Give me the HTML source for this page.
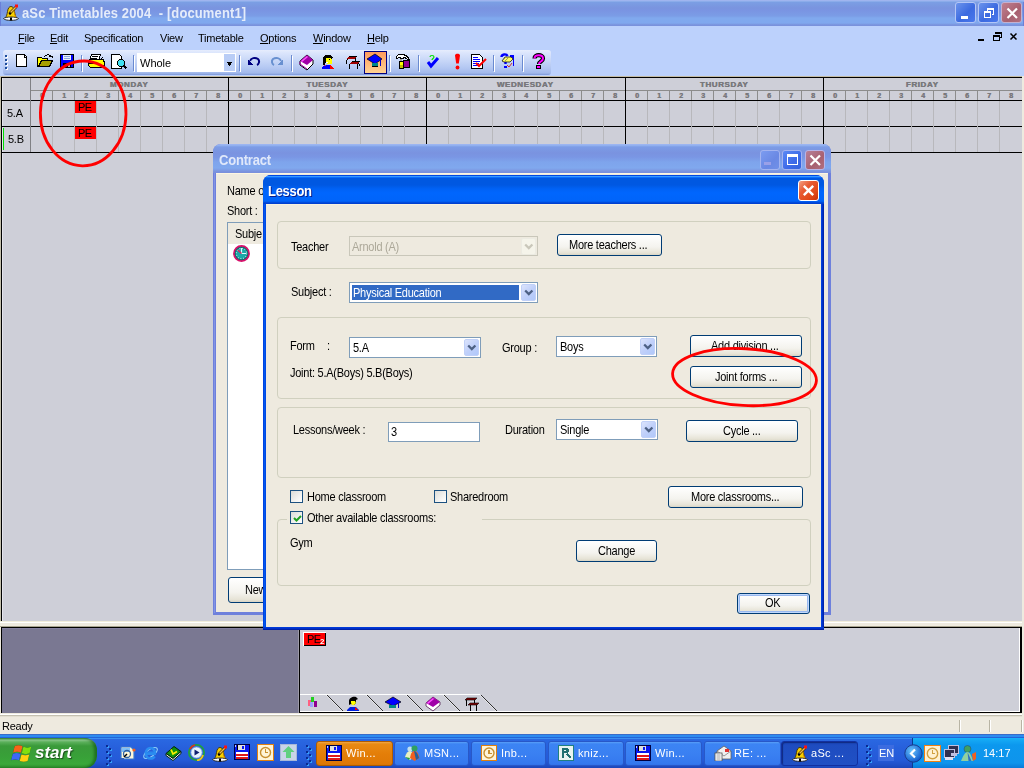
<!DOCTYPE html>
<html><head><meta charset="utf-8">
<style>
html,body{margin:0;padding:0;width:1024px;height:768px;overflow:hidden;background:#cecfd8;font-family:"Liberation Sans",sans-serif;font-size:11px;color:#000}
.a{position:absolute}
#root{position:relative;width:1024px;height:768px;overflow:hidden}
.dh{font-weight:bold;font-size:8px;color:#78787c;text-align:center;letter-spacing:0.6px;line-height:9px;text-shadow:0.5px 0 0 #78787c}
.dg{font-weight:bold;font-size:7px;color:#78787c;text-align:center;line-height:9px;text-shadow:0.5px 0 0 #78787c}
.xpb{width:20px;height:20px;border-radius:3px;box-sizing:border-box}
.inact{border:1px solid #a4b4f0;background:linear-gradient(135deg,#7c98ec,#5a78dc 60%,#6a88e4)}
.inactc{border:1px solid #b8b4e8;background:linear-gradient(135deg,#b88098,#a86070 60%,#b07080)}
.actc{width:21px;height:21px;border:1px solid #fff;background:linear-gradient(135deg,#f4a084 0%,#e85c34 35%,#e24a1a 70%,#c83008 100%)}
.btn{border:1px solid #003c74;border-radius:3px;box-sizing:border-box;background:linear-gradient(#fff,#f4f3ee 60%,#e6e3d6 90%,#d8d4c4)}
.gb{border:1px solid #d0d0bf;border-radius:4px;box-sizing:border-box}
.cb{background:#fff;border:1px solid #7f9db9;box-sizing:border-box}
.dis{background:#eeeadf;border-color:#c9c7ba}
.ddb{right:1px;top:1px;width:15px;height:17px;border-radius:2px;background:linear-gradient(135deg,#dce4fc,#c0d0fa 50%,#b0c8fa);border:1px solid #c0d0f8;box-sizing:border-box}
.disb{background:#f5f4ea;border-color:#ecebe2}
.chk{width:13px;height:13px;border:1px solid #1c5180;box-sizing:border-box;background:linear-gradient(135deg,#dcdcd7,#f6f6f4 70%,#fff)}
.def{box-shadow:inset 0 0 0 1px #c0d8fc,inset 0 0 0 2px #98b8f0}
.tbtn{width:21px;height:21px;box-sizing:border-box;border:1px solid #b4c6f6;border-radius:3px;background:linear-gradient(135deg,#6c94ec,#3c6ae0 55%,#4a78ec)}
.tclose{background:linear-gradient(135deg,#c08090,#a86070 60%,#b07080);border-color:#c4b0d0}
.d{transform:scaleY(1.12);transform-origin:0 2.3px}
.t{will-change:transform;position:absolute;letter-spacing:-0.25px;white-space:nowrap;line-height:13px}
</style></head><body><div id="root">
<!-- main title bar -->
<div class="a" style="left:0;top:0;width:1024px;height:26px;background:linear-gradient(#a3b1ee 0px,#9cb9f0 1px,#7b9fe4 2px,#7a94df 8px,#7a95e3 11px,#7b9de6 16px,#80a9ee 18px,#80a8ee 23px,#7a92dc 25px)"></div>
<div class="t" style="left:22px;top:5px;color:#e4ecfa;font-weight:bold;font-size:13px;line-height:16px;letter-spacing:0.12px;transform:scaleY(1.07);transform-origin:0 3px">aSc Timetables 2004&nbsp; - [document1]</div>
<div class="a" style="left:0;top:2px;width:1px;height:24px;background:#6a80d8"></div>
<div class="a" style="left:1023px;top:2px;width:1px;height:24px;background:#6a80d8"></div>
<svg class="a" style="left:2px;top:3px" width="18" height="18" shape-rendering="auto">
<path d="M3.5 14.5c1-1 1.5-3 2-6c0.6-3.5 1.8-5 3.5-5c1.7 0 2.9 1.5 3.5 5c0.5 3 1 5 2 6z" fill="#f8d000" stroke="#403000" stroke-width="0.9"/>
<path d="M11 5c1 2 1.5 5 2 9h1.5c-1-1-1.5-3-2-6c-0.3-1.5-0.8-2.5-1.5-3z" fill="#e89000"/>
<path d="M1.5 15.5c2-2 13-2 15 0c-1 2.5-14 2.5-15 0z" fill="#fff" stroke="#202020" stroke-width="0.9"/>
<rect x="8" y="14.5" width="2" height="3" fill="#000"/>
<path d="M7.5 10.5l6.5-6.5" stroke="#402800" stroke-width="2.6"/>
<path d="M7.5 10.5l6.5-6.5" stroke="#f0c040" stroke-width="1.4"/>
<rect x="13" y="1.5" width="3" height="3" fill="#ff1010"/>
<circle cx="8" cy="10.5" r="1.2" fill="#000"/>
</svg>
<div class="a tbtn" style="left:955px;top:2px"><div class="a" style="left:5px;top:13px;width:7px;height:3px;background:#fff"></div></div>
<div class="a tbtn" style="left:978px;top:2px"><svg class="a" style="left:0;top:0" width="21" height="21" shape-rendering="crispEdges"><path d="M8.5 5.5h6v6h-2M8.5 5.5v2" fill="none" stroke="#fff"/><rect x="8" y="5" width="7" height="2" fill="#fff"/><rect x="5.5" y="9.5" width="6" height="5" fill="none" stroke="#fff"/><rect x="5" y="8" width="7" height="2" fill="#fff"/></svg></div>
<div class="a tbtn tclose" style="left:1001px;top:2px"><svg class="a" style="left:0;top:0" width="21" height="21"><path d="M5.5 5.5L15 15M15 5.5L5.5 15" stroke="#fff" stroke-width="2.2"/></svg></div>

<!-- menu bar -->
<div class="a" style="left:0;top:26px;width:1024px;height:50px;background:#bcd1fc"></div>
<!-- mdi buttons -->
<svg class="a" style="left:970px;top:28px" width="54" height="20" shape-rendering="crispEdges">
<rect x="8" y="11" width="6" height="2" fill="#000"/>
<path d="M25.5 4.5h6v5h-2" fill="none" stroke="#000"/><rect x="25" y="4" width="7" height="2" fill="#000"/>
<rect x="23.5" y="7.5" width="6" height="5" fill="none" stroke="#000"/><rect x="23" y="7" width="7" height="2" fill="#000"/>
<path d="M40.5 5.5l6 6M46.5 5.5l-6 6" stroke="#000" stroke-width="1.5" shape-rendering="auto"/>
</svg>
<div class="t" style="left:18px;top:32px"><u>F</u>ile</div>
<div class="t" style="left:50px;top:32px"><u>E</u>dit</div>
<div class="t" style="left:84px;top:32px">Specification</div>
<div class="t" style="left:160px;top:32px">View</div>
<div class="t" style="left:198px;top:32px">Timetable</div>
<div class="t" style="left:260px;top:32px"><u>O</u>ptions</div>
<div class="t" style="left:313px;top:32px"><u>W</u>indow</div>
<div class="t" style="left:367px;top:32px"><u>H</u>elp</div>
<!-- toolbar -->
<div class="a" style="left:3px;top:50px;width:548px;height:25px;border-radius:3px 3px 3px 3px;background:linear-gradient(#e6edfd 0px,#dbe5fc 3px,#c9d8f8 10px,#b3c7f2 18px,#a2b9ec 23px,#7d98d8 25px)"></div>
<svg class="a" style="left:0;top:48px" width="560" height="30" shape-rendering="crispEdges">
<g fill="#fff"><rect x="6" y="8" width="2" height="2"/><rect x="6" y="12" width="2" height="2"/><rect x="6" y="16" width="2" height="2"/><rect x="6" y="20" width="2" height="2"/></g>
<g fill="#1c4c9c"><rect x="5" y="7" width="2" height="2"/><rect x="5" y="11" width="2" height="2"/><rect x="5" y="15" width="2" height="2"/><rect x="5" y="19" width="2" height="2"/></g>
<!-- new -->
<path d="M16.5 6.5H24.5L26.5 8.5V18.5H16.5Z" fill="#fff" stroke="#000"/>
<path d="M24 7v2h2" fill="none" stroke="#000"/>
<!-- open -->
<path d="M37.5 9.5h4l1 1h5v2h-6l-3.5 6h-0.5z" fill="#ffff00" stroke="#000"/>
<path d="M38.5 18.5l3-6h11l-3 6z" fill="#a8a000" stroke="#000"/>
<path d="M44 9c2-3 6-3 7 0" fill="none" stroke="#000"/><path d="M49 8h3v2" fill="none" stroke="#000"/>
<!-- save -->
<rect x="60.5" y="6.5" width="13" height="13" fill="#0000ff" stroke="#000"/>
<rect x="63" y="7" width="8" height="5" fill="#e8eef8"/><rect x="64" y="8" width="6" height="1" fill="#8ca8e0"/><rect x="64" y="10" width="6" height="1" fill="#8ca8e0"/>
<rect x="63" y="15" width="8" height="4" fill="#000"/><rect x="68" y="16" width="2" height="3" fill="#c0c0c0"/>
<rect x="81" y="7" width="1" height="16" fill="#6a8ad0"/><rect x="82" y="8" width="1" height="16" fill="#fff"/>
<!-- print -->
<path d="M91.5 6.5h9l-1.5 5h-9z" fill="#fff" stroke="#000"/>
<path d="M92 8.5h6M91 10h6" stroke="#000"/>
<path d="M88.5 13.5l1.5-2h13l1 2v4l-1.5 2h-12l-2-2z" fill="#ffff00" stroke="#000"/>
<path d="M89 15.5h9" stroke="#000"/><path d="M101 11l2-2" stroke="#000"/>
<!-- preview -->
<path d="M111.5 6.5H119.5L121.5 8.5V20.5H111.5Z" fill="#fff" stroke="#000"/>
<circle cx="121" cy="15" r="3.5" fill="#40e0f0" stroke="#000"/>
<path d="M123.5 17.5l3 3" stroke="#000" stroke-width="1.6"/>
<rect x="133" y="7" width="1" height="16" fill="#6a8ad0"/><rect x="134" y="8" width="1" height="16" fill="#fff"/>
<!-- combo -->
<rect x="137" y="5" width="99" height="19" fill="#fff"/>
<rect x="224" y="6" width="11" height="17" fill="#b9cdf6"/>
<path d="M227 14h5v1h-1v1h-3v-1h-1zM228 16h3v1h-1v1h-1z" fill="#000"/>
<rect x="239" y="7" width="1" height="16" fill="#6a8ad0"/><rect x="240" y="8" width="1" height="16" fill="#fff"/>
<!-- undo/redo -->
<path d="M250 13c1-3 5-4 8-2c2 2 1 5-1 6" fill="none" stroke="#000080" stroke-width="2" shape-rendering="auto"/>
<path d="M248 11v6h5z" fill="#000080"/>
<path d="M281 13c-1-3-5-4-8-2c-2 2-1 5 1 6" fill="none" stroke="#6890d0" stroke-width="2" shape-rendering="auto"/>
<path d="M283 11v6h-5z" fill="#6890d0"/>
<rect x="291" y="7" width="1" height="16" fill="#6a8ad0"/><rect x="292" y="8" width="1" height="16" fill="#fff"/>
<!-- book -->
<path d="M300 13l7-6l6 5v4l-6 6l-7-5z" fill="#fff" stroke="#000" shape-rendering="auto"/>
<path d="M300 13l7-6l6 5l-6 5z" fill="#a000a8" shape-rendering="auto"/>
<path d="M301 13l6-5l1 1l-6 5z" fill="#ff50ff" shape-rendering="auto"/>
<path d="M300 14v2l7 5" fill="none" stroke="#a000a8" shape-rendering="auto"/>
<!-- person -->
<path d="M325 7h5l2 1l1 2l-1 0v3h-1v-3h-5v5h-1v2h-2v-7z" fill="#000"/>
<path d="M326 10h5l1 2v3l-1 1h-3l-2-1z" fill="#ffff00"/>
<rect x="329" y="11" width="1" height="1" fill="#000"/><rect x="326" y="14" width="2" height="1" fill="#fff"/>
<path d="M322 21v-2l2-2h6l1 1v3z" fill="#0000ff"/>
<path d="M330 17l4 4h-4z" fill="#ff0000"/><path d="M324 17h2v1h-2z" fill="#c03080"/>
<!-- desks -->
<path d="M345 12h2l2-4h8l-1 3h-8l-1 1z" fill="#000"/><path d="M348 9h8l-1 2h-8z" fill="#a00000"/>
<rect x="346" y="12" width="1" height="4" fill="#000"/><rect x="355" y="11" width="1" height="2" fill="#000"/>
<path d="M348 16h2l2-3h8l-1 3h-9z" fill="#000"/><path d="M351 14h8l-1 2h-8z" fill="#a00000"/>
<rect x="349" y="16" width="1" height="5" fill="#000"/><rect x="357" y="16" width="1" height="5" fill="#000"/><rect x="359" y="16" width="1" height="2" fill="#000"/>
<!-- pressed -->
<defs><linearGradient id="og" x1="0" y1="0" x2="0" y2="1"><stop offset="0" stop-color="#ff9a5c"/><stop offset="1" stop-color="#ffd494"/></linearGradient></defs>
<rect x="364.5" y="3.5" width="22" height="22" fill="url(#og)" stroke="#000080"/>
<path d="M367 11l8-5l7 5l-7 5z" fill="#0000ff" stroke="#000" stroke-width="0.7" shape-rendering="auto"/>
<path d="M372 15h6v3h-6z" fill="#008888"/><path d="M372 18h6v1h-6z" fill="#000"/>
<rect x="380" y="12" width="1" height="6" fill="#0000c0"/>
<rect x="389" y="7" width="1" height="16" fill="#6a8ad0"/><rect x="390" y="8" width="1" height="16" fill="#fff"/>
<!-- hammer -->
<path d="M396.5 8.5l2-2h5l4 2l1.5 3h-1.5l-2.5-2h-2v1h-3v-1h-1.5l-1 1h-1z" fill="#fff" stroke="#000" stroke-width="1"/>
<rect x="400" y="11" width="2" height="3" fill="#a0a0a0"/>
<rect x="399.5" y="13.5" width="4" height="7" fill="#ffff00" stroke="#000"/>
<rect x="400" y="17" width="3" height="3" fill="#c0c000"/>
<rect x="403.5" y="12.5" width="6" height="7" fill="#900090" stroke="#000"/>
<rect x="418" y="7" width="1" height="16" fill="#6a8ad0"/><rect x="419" y="8" width="1" height="16" fill="#fff"/>
<!-- check -->
<path d="M428 14l3 4l7-8" fill="none" stroke="#0000ff" stroke-width="3" shape-rendering="auto"/>
<path d="M430 9c0-2 4-2 4 0c0 1-2 2-2 3" fill="none" stroke="#00e000" stroke-width="1.2" shape-rendering="auto"/>
<!-- exclam -->
<path d="M455 7.5c0-2.2 5-2.2 5 0l-1.2 8h-2.6z" fill="#ff0000" shape-rendering="auto"/><circle cx="457.5" cy="19.5" r="1.9" fill="#ff0000" shape-rendering="auto"/>
<!-- doc check -->
<path d="M471.5 6.5H479.5L482.5 9.5V20.5H471.5Z" fill="#fff" stroke="#000"/>
<g fill="#0000ff"><rect x="473" y="9" width="5" height="1"/><rect x="473" y="11" width="7" height="1"/><rect x="473" y="13" width="7" height="1"/><rect x="473" y="15" width="6" height="1"/><rect x="473" y="17" width="5" height="1"/></g>
<path d="M476 15l3 3l7-7" fill="none" stroke="#ff0000" stroke-width="2" shape-rendering="auto"/>
<rect x="493" y="7" width="1" height="16" fill="#6a8ad0"/><rect x="494" y="8" width="1" height="16" fill="#fff"/>
<!-- magic -->
<path d="M501.5 9c0-3 5-3.5 6-1M505.5 13v3" fill="none" stroke="#0000ff" stroke-width="2.4" shape-rendering="auto"/>
<rect x="504" y="18" width="3" height="2" fill="#0000ff"/>
<path d="M510 7h4v11h-1v-8l-3-1z" fill="#0000ff"/>
<path d="M502 13l3-4h6l2 2l-3 3h-6z" fill="#ffff60" stroke="#000" stroke-width="0.7" shape-rendering="auto"/>
<path d="M503 12l2-2M505 13l3-3" stroke="#707070" stroke-width="0.7"/>
<path d="M507 17l2 2l3-4" fill="none" stroke="#d02020" stroke-width="0.9" shape-rendering="auto"/>
<rect x="522" y="7" width="1" height="16" fill="#6a8ad0"/><rect x="523" y="8" width="1" height="16" fill="#fff"/>
<!-- help -->
<path d="M534.5 10.5c0-4.5 8.5-4.5 8.5 0c0 3-4 3-4 5.5" fill="none" stroke="#000" stroke-width="4.2" shape-rendering="auto"/>
<path d="M534.5 10.5c0-4.5 8.5-4.5 8.5 0c0 3-4 3-4 5.5" fill="none" stroke="#ff00ff" stroke-width="2" shape-rendering="auto"/>
<rect x="536.5" y="17.5" width="4" height="3" fill="#ff00ff" stroke="#000"/>
</svg>
<div class="t" style="left:140px;top:57px;letter-spacing:0">Whole</div>
<!-- grid -->
<div class="a" style="left:0;top:76px;width:1024px;height:1px;background:#c4bca4"></div>
<div class="a" style="left:0;top:77px;width:1024px;height:76px;background:#cecfd8"></div>
<div class="a" style="left:1px;top:77px;width:1021px;height:1px;background:#000"></div>
<div class="a" style="left:1px;top:77px;width:1px;height:550px;background:#000"></div><div class="a" style="left:2px;top:78px;width:1px;height:543px;background:#e4e4ec"></div>
<div class="a" style="left:30px;top:90px;width:992px;height:1px;background:#8c8c8c"></div>
<div class="a" style="left:1px;top:100px;width:1021px;height:1px;background:#000"></div>
<div class="a" style="left:1px;top:126px;width:1021px;height:1px;background:#000"></div>
<div class="a" style="left:1px;top:152px;width:1021px;height:1px;background:#000"></div>
<div class="a" style="left:30px;top:78px;width:1px;height:74px;background:#808084"></div>
<div class="a" style="left:52px;top:90px;width:1px;height:10px;background:#8c8c8c"></div>
<div class="a" style="left:52px;top:101px;width:1px;height:51px;background:#b8b8bc"></div>
<div class="a" style="left:74px;top:90px;width:1px;height:10px;background:#8c8c8c"></div>
<div class="a" style="left:74px;top:101px;width:1px;height:51px;background:#b8b8bc"></div>
<div class="a" style="left:96px;top:90px;width:1px;height:10px;background:#8c8c8c"></div>
<div class="a" style="left:96px;top:101px;width:1px;height:51px;background:#b8b8bc"></div>
<div class="a" style="left:118px;top:90px;width:1px;height:10px;background:#8c8c8c"></div>
<div class="a" style="left:118px;top:101px;width:1px;height:51px;background:#b8b8bc"></div>
<div class="a" style="left:140px;top:90px;width:1px;height:10px;background:#8c8c8c"></div>
<div class="a" style="left:140px;top:101px;width:1px;height:51px;background:#b8b8bc"></div>
<div class="a" style="left:162px;top:90px;width:1px;height:10px;background:#8c8c8c"></div>
<div class="a" style="left:162px;top:101px;width:1px;height:51px;background:#b8b8bc"></div>
<div class="a" style="left:184px;top:90px;width:1px;height:10px;background:#8c8c8c"></div>
<div class="a" style="left:184px;top:101px;width:1px;height:51px;background:#b8b8bc"></div>
<div class="a" style="left:206px;top:90px;width:1px;height:10px;background:#8c8c8c"></div>
<div class="a" style="left:206px;top:101px;width:1px;height:51px;background:#b8b8bc"></div>
<div class="a" style="left:228px;top:77px;width:1px;height:76px;background:#000"></div>
<div class="a" style="left:250px;top:90px;width:1px;height:10px;background:#8c8c8c"></div>
<div class="a" style="left:250px;top:101px;width:1px;height:51px;background:#b8b8bc"></div>
<div class="a" style="left:272px;top:90px;width:1px;height:10px;background:#8c8c8c"></div>
<div class="a" style="left:272px;top:101px;width:1px;height:51px;background:#b8b8bc"></div>
<div class="a" style="left:294px;top:90px;width:1px;height:10px;background:#8c8c8c"></div>
<div class="a" style="left:294px;top:101px;width:1px;height:51px;background:#b8b8bc"></div>
<div class="a" style="left:316px;top:90px;width:1px;height:10px;background:#8c8c8c"></div>
<div class="a" style="left:316px;top:101px;width:1px;height:51px;background:#b8b8bc"></div>
<div class="a" style="left:338px;top:90px;width:1px;height:10px;background:#8c8c8c"></div>
<div class="a" style="left:338px;top:101px;width:1px;height:51px;background:#b8b8bc"></div>
<div class="a" style="left:360px;top:90px;width:1px;height:10px;background:#8c8c8c"></div>
<div class="a" style="left:360px;top:101px;width:1px;height:51px;background:#b8b8bc"></div>
<div class="a" style="left:382px;top:90px;width:1px;height:10px;background:#8c8c8c"></div>
<div class="a" style="left:382px;top:101px;width:1px;height:51px;background:#b8b8bc"></div>
<div class="a" style="left:404px;top:90px;width:1px;height:10px;background:#8c8c8c"></div>
<div class="a" style="left:404px;top:101px;width:1px;height:51px;background:#b8b8bc"></div>
<div class="a" style="left:426px;top:77px;width:1px;height:76px;background:#000"></div>
<div class="a" style="left:448px;top:90px;width:1px;height:10px;background:#8c8c8c"></div>
<div class="a" style="left:448px;top:101px;width:1px;height:51px;background:#b8b8bc"></div>
<div class="a" style="left:470px;top:90px;width:1px;height:10px;background:#8c8c8c"></div>
<div class="a" style="left:470px;top:101px;width:1px;height:51px;background:#b8b8bc"></div>
<div class="a" style="left:492px;top:90px;width:1px;height:10px;background:#8c8c8c"></div>
<div class="a" style="left:492px;top:101px;width:1px;height:51px;background:#b8b8bc"></div>
<div class="a" style="left:514px;top:90px;width:1px;height:10px;background:#8c8c8c"></div>
<div class="a" style="left:514px;top:101px;width:1px;height:51px;background:#b8b8bc"></div>
<div class="a" style="left:537px;top:90px;width:1px;height:10px;background:#8c8c8c"></div>
<div class="a" style="left:537px;top:101px;width:1px;height:51px;background:#b8b8bc"></div>
<div class="a" style="left:559px;top:90px;width:1px;height:10px;background:#8c8c8c"></div>
<div class="a" style="left:559px;top:101px;width:1px;height:51px;background:#b8b8bc"></div>
<div class="a" style="left:581px;top:90px;width:1px;height:10px;background:#8c8c8c"></div>
<div class="a" style="left:581px;top:101px;width:1px;height:51px;background:#b8b8bc"></div>
<div class="a" style="left:603px;top:90px;width:1px;height:10px;background:#8c8c8c"></div>
<div class="a" style="left:603px;top:101px;width:1px;height:51px;background:#b8b8bc"></div>
<div class="a" style="left:625px;top:77px;width:1px;height:76px;background:#000"></div>
<div class="a" style="left:647px;top:90px;width:1px;height:10px;background:#8c8c8c"></div>
<div class="a" style="left:647px;top:101px;width:1px;height:51px;background:#b8b8bc"></div>
<div class="a" style="left:669px;top:90px;width:1px;height:10px;background:#8c8c8c"></div>
<div class="a" style="left:669px;top:101px;width:1px;height:51px;background:#b8b8bc"></div>
<div class="a" style="left:691px;top:90px;width:1px;height:10px;background:#8c8c8c"></div>
<div class="a" style="left:691px;top:101px;width:1px;height:51px;background:#b8b8bc"></div>
<div class="a" style="left:713px;top:90px;width:1px;height:10px;background:#8c8c8c"></div>
<div class="a" style="left:713px;top:101px;width:1px;height:51px;background:#b8b8bc"></div>
<div class="a" style="left:735px;top:90px;width:1px;height:10px;background:#8c8c8c"></div>
<div class="a" style="left:735px;top:101px;width:1px;height:51px;background:#b8b8bc"></div>
<div class="a" style="left:757px;top:90px;width:1px;height:10px;background:#8c8c8c"></div>
<div class="a" style="left:757px;top:101px;width:1px;height:51px;background:#b8b8bc"></div>
<div class="a" style="left:779px;top:90px;width:1px;height:10px;background:#8c8c8c"></div>
<div class="a" style="left:779px;top:101px;width:1px;height:51px;background:#b8b8bc"></div>
<div class="a" style="left:801px;top:90px;width:1px;height:10px;background:#8c8c8c"></div>
<div class="a" style="left:801px;top:101px;width:1px;height:51px;background:#b8b8bc"></div>
<div class="a" style="left:823px;top:77px;width:1px;height:76px;background:#000"></div>
<div class="a" style="left:845px;top:90px;width:1px;height:10px;background:#8c8c8c"></div>
<div class="a" style="left:845px;top:101px;width:1px;height:51px;background:#b8b8bc"></div>
<div class="a" style="left:867px;top:90px;width:1px;height:10px;background:#8c8c8c"></div>
<div class="a" style="left:867px;top:101px;width:1px;height:51px;background:#b8b8bc"></div>
<div class="a" style="left:889px;top:90px;width:1px;height:10px;background:#8c8c8c"></div>
<div class="a" style="left:889px;top:101px;width:1px;height:51px;background:#b8b8bc"></div>
<div class="a" style="left:911px;top:90px;width:1px;height:10px;background:#8c8c8c"></div>
<div class="a" style="left:911px;top:101px;width:1px;height:51px;background:#b8b8bc"></div>
<div class="a" style="left:933px;top:90px;width:1px;height:10px;background:#8c8c8c"></div>
<div class="a" style="left:933px;top:101px;width:1px;height:51px;background:#b8b8bc"></div>
<div class="a" style="left:955px;top:90px;width:1px;height:10px;background:#8c8c8c"></div>
<div class="a" style="left:955px;top:101px;width:1px;height:51px;background:#b8b8bc"></div>
<div class="a" style="left:977px;top:90px;width:1px;height:10px;background:#8c8c8c"></div>
<div class="a" style="left:977px;top:101px;width:1px;height:51px;background:#b8b8bc"></div>
<div class="a" style="left:999px;top:90px;width:1px;height:10px;background:#8c8c8c"></div>
<div class="a" style="left:999px;top:101px;width:1px;height:51px;background:#b8b8bc"></div>
<div class="a dh" style="left:30px;top:80px;width:198px">MONDAY</div>
<div class="a dg" style="left:31px;top:91px;width:22px">0</div>
<div class="a dg" style="left:53px;top:91px;width:22px">1</div>
<div class="a dg" style="left:75px;top:91px;width:22px">2</div>
<div class="a dg" style="left:97px;top:91px;width:22px">3</div>
<div class="a dg" style="left:119px;top:91px;width:22px">4</div>
<div class="a dg" style="left:141px;top:91px;width:22px">5</div>
<div class="a dg" style="left:163px;top:91px;width:22px">6</div>
<div class="a dg" style="left:185px;top:91px;width:22px">7</div>
<div class="a dg" style="left:207px;top:91px;width:22px">8</div>
<div class="a dh" style="left:228px;top:80px;width:198px">TUESDAY</div>
<div class="a dg" style="left:229px;top:91px;width:22px">0</div>
<div class="a dg" style="left:251px;top:91px;width:22px">1</div>
<div class="a dg" style="left:273px;top:91px;width:22px">2</div>
<div class="a dg" style="left:295px;top:91px;width:22px">3</div>
<div class="a dg" style="left:317px;top:91px;width:22px">4</div>
<div class="a dg" style="left:339px;top:91px;width:22px">5</div>
<div class="a dg" style="left:361px;top:91px;width:22px">6</div>
<div class="a dg" style="left:383px;top:91px;width:22px">7</div>
<div class="a dg" style="left:405px;top:91px;width:22px">8</div>
<div class="a dh" style="left:426px;top:80px;width:198px">WEDNESDAY</div>
<div class="a dg" style="left:427px;top:91px;width:22px">0</div>
<div class="a dg" style="left:449px;top:91px;width:22px">1</div>
<div class="a dg" style="left:471px;top:91px;width:22px">2</div>
<div class="a dg" style="left:493px;top:91px;width:22px">3</div>
<div class="a dg" style="left:515px;top:91px;width:22px">4</div>
<div class="a dg" style="left:538px;top:91px;width:22px">5</div>
<div class="a dg" style="left:560px;top:91px;width:22px">6</div>
<div class="a dg" style="left:582px;top:91px;width:22px">7</div>
<div class="a dg" style="left:604px;top:91px;width:22px">8</div>
<div class="a dh" style="left:625px;top:80px;width:198px">THURSDAY</div>
<div class="a dg" style="left:626px;top:91px;width:22px">0</div>
<div class="a dg" style="left:648px;top:91px;width:22px">1</div>
<div class="a dg" style="left:670px;top:91px;width:22px">2</div>
<div class="a dg" style="left:692px;top:91px;width:22px">3</div>
<div class="a dg" style="left:714px;top:91px;width:22px">4</div>
<div class="a dg" style="left:736px;top:91px;width:22px">5</div>
<div class="a dg" style="left:758px;top:91px;width:22px">6</div>
<div class="a dg" style="left:780px;top:91px;width:22px">7</div>
<div class="a dg" style="left:802px;top:91px;width:22px">8</div>
<div class="a dh" style="left:823px;top:80px;width:198px">FRIDAY</div>
<div class="a dg" style="left:824px;top:91px;width:22px">0</div>
<div class="a dg" style="left:846px;top:91px;width:22px">1</div>
<div class="a dg" style="left:868px;top:91px;width:22px">2</div>
<div class="a dg" style="left:890px;top:91px;width:22px">3</div>
<div class="a dg" style="left:912px;top:91px;width:22px">4</div>
<div class="a dg" style="left:934px;top:91px;width:22px">5</div>
<div class="a dg" style="left:956px;top:91px;width:22px">6</div>
<div class="a dg" style="left:978px;top:91px;width:22px">7</div>
<div class="a dg" style="left:1000px;top:91px;width:22px">8</div>
<div class="t" style="left:7px;top:107px">5.A</div>
<div class="t" style="left:8px;top:133px">5.B</div>
<div class="a" style="left:3px;top:128px;width:1px;height:22px;background:#00e000"></div>
<div class="a" style="left:75px;top:101px;width:21px;height:12px;background:#f00"></div>
<div class="t" style="left:78px;top:101px;line-height:12px;letter-spacing:-0.6px">PE</div>
<div class="a" style="left:75px;top:127px;width:21px;height:12px;background:#f00"></div>
<div class="t" style="left:78px;top:127px;line-height:12px;letter-spacing:-0.6px">PE</div>


<!-- splitter / lower panel -->
<div class="a" style="left:0;top:76px;width:1px;height:551px;background:#c4c0ac"></div>
<div class="a" style="left:1022px;top:76px;width:2px;height:658px;background:#eeeadf"></div>
<div class="a" style="left:0;top:621px;width:1022px;height:6px;background:linear-gradient(#f2eedc 0px,#f2eedc 1px,#fff 1px,#fff 2px,#eeeadf 2px,#eeeadf 4px,#f0ecdf 4px,#f0ecdf 5px,#a8a490 5px)"></div>
<div class="a" style="left:0;top:627px;width:1022px;height:1px;background:#000"></div>
<div class="a" style="left:0;top:628px;width:299px;height:85px;background:#7a7892"></div>
<div class="a" style="left:0;top:628px;width:299px;height:1px;background:#8480a0"></div>
<div class="a" style="left:1px;top:627px;width:1px;height:86px;background:#000"></div>
<div class="a" style="left:0;top:627px;width:1px;height:87px;background:#eeeadf"></div>
<div class="a" style="left:298px;top:628px;width:1px;height:85px;background:#9c9aa8"></div>
<div class="a" style="left:299px;top:627px;width:1px;height:86px;background:#000"></div>
<div class="a" style="left:300px;top:628px;width:720px;height:84px;background:#cecfd8"></div>
<div class="a" style="left:1019px;top:628px;width:1px;height:84px;background:#fff"></div>
<div class="a" style="left:1020px;top:627px;width:2px;height:86px;background:#000"></div>
<div class="a" style="left:300px;top:711px;width:720px;height:1px;background:#fff"></div>
<div class="a" style="left:299px;top:712px;width:723px;height:1px;background:#000"></div>
<div class="a" style="left:300px;top:694px;width:180px;height:1px;background:#fff"></div>
<svg class="a" style="left:300px;top:629px" width="200" height="84" shape-rendering="auto">
<g stroke="#303030" stroke-width="1"><path d="M27 66L43 82M67 66L83 82M107 66L123 82M144 66L160 82M181 66L197 82"/></g>
<g stroke="#fff" stroke-width="1"><path d="M26 66L42 82M66 66L82 82M106 66L122 82M143 66L159 82M180 66L196 82" opacity="0.5"/></g>
<g shape-rendering="crispEdges"><rect x="8" y="71" width="3" height="6" fill="#ff6080"/><rect x="11" y="68" width="3" height="5" fill="#20d020"/><rect x="10" y="73" width="3" height="5" fill="#a0a0ff"/><rect x="14" y="72" width="3" height="6" fill="#900090"/></g>
<path d="M49 72c0-3 4-5 7-4l2 2l-2 1v3l-2 2l-3-1l-2 1z" fill="#000"/>
<path d="M51 72h4l1 2l-2 2h-2l-1-2z" fill="#ffff00"/>
<path d="M47 81l3-3h6l3 3v1h-12z" fill="#0020e0"/><path d="M55 78l3 3h-3z" fill="#ff0000"/>
<path d="M85 73l8-5l8 5l-8 4z" fill="#0000ff" stroke="#000" stroke-width="0.7"/>
<path d="M89 76h7v3h-7z" fill="#008888"/><rect x="98" y="73" width="1" height="6" fill="#0000c0"/>
<path d="M126 74l7-6l7 5v3l-7 6l-7-5z" fill="#fff" stroke="#502050" stroke-width="0.8"/>
<path d="M126 74l7-6l7 5l-7 5z" fill="#a000a8"/><path d="M127 74l6-5l1 1l-6 5z" fill="#ff50ff"/>
<path d="M165 71l2-2h10l-2 2z" fill="#800000" stroke="#000" stroke-width="0.6"/>
<rect x="166" y="71" width="1" height="6" fill="#000"/><rect x="174" y="71" width="1" height="3" fill="#000"/>
<path d="M168 76l2-2h9l-2 2z" fill="#800000" stroke="#000" stroke-width="0.6"/>
<rect x="170" y="76" width="1" height="6" fill="#000"/><rect x="176" y="76" width="1" height="6" fill="#000"/>
</svg>
<div class="a" style="left:303px;top:632px;width:23px;height:14px;background:#fff"></div>
<div class="a" style="left:304px;top:633px;width:22px;height:13px;background:#000"></div>
<div class="a" style="left:304px;top:633px;width:21px;height:12px;background:#f00"></div>
<div class="t" style="left:307px;top:633px;line-height:12px;letter-spacing:-0.6px">PE</div>
<div class="t" style="left:320px;top:637px;line-height:9px;font-size:8px;font-weight:bold;color:#fff;letter-spacing:0">2</div>
<!-- status bar -->
<div class="a" style="left:0;top:713px;width:1022px;height:21px;background:linear-gradient(#eeeadf 0px,#eeeadf 1px,#fff 1px,#fff 2px,#b0ac9c 2px,#d8d4c4 3px,#eeeadf 4px)"></div>
<div class="a" style="left:959px;top:720px;width:1px;height:12px;background:#b8b4a4"></div>
<div class="a" style="left:960px;top:720px;width:1px;height:12px;background:#fff"></div>
<div class="a" style="left:989px;top:720px;width:1px;height:12px;background:#b8b4a4"></div>
<div class="a" style="left:990px;top:720px;width:1px;height:12px;background:#fff"></div><div class="a" style="left:1021px;top:720px;width:1px;height:12px;background:#b8b4a4"></div><div class="a" style="left:1022px;top:720px;width:1px;height:12px;background:#fff"></div>
<div class="t" style="left:2px;top:720px">Ready</div>
<!-- taskbar -->
<div class="a" style="left:0;top:734px;width:1024px;height:34px;background:linear-gradient(#3a6cc8 0px,#3a6cc8 1px,#2d8cf0 1px,#2d8cf0 3px,#2264d8 3px,#2264d8 4px,#3a8ef0 4px,#3a8ef0 5px,#2a68e2 5px,#2760dc 14px,#245ad8 26px,#2050c8 31px,#1c46b8 34px)"></div>
<div class="a" style="left:0;top:738px;width:97px;height:30px;border-radius:0 12px 12px 0;background:linear-gradient(#3c8c3c 0px,#5aa85a 1px,#8cc88c 2px,#5cb05c 4px,#3a9a3a 8px,#38a038 18px,#3aa83a 26px,#2e902e 30px);box-shadow:inset -3px 0 3px rgba(0,60,0,0.45)"></div>
<svg class="a" style="left:9px;top:743px" width="22" height="20"><g transform="translate(1.5 0.5) scale(1.05)" filter="drop-shadow(0.6px 0.8px 0.4px rgba(0,40,0,0.7))"><path d="M4 2.5c2-1.2 5-1.2 7.5 0l-1.6 6.2c-2.2-1-5-1-7.5 0z" fill="#f86418"/><path d="M12.3 3.2c2.3 1 5 1 7.5 0l-1.6 6.2c-2.3 1-5 1-7.5 0z" fill="#80e010"/><path d="M2.2 9.8c2.3-1 5-1 7.5 0l-1.6 6.2c-2.3-1-5-1-7.5 0z" fill="#3c68f8"/><path d="M10.4 10.5c2.3 1 5 1 7.5 0l-1.6 6.2c-2.3 1-5 1-7.5 0z" fill="#ffd010"/></g></svg>
<div class="a" style="left:106px;top:745px;width:2px;height:2px;background:#0a2a90;box-shadow:1px 1px 0 #38a0f8"></div>
<div class="a" style="left:109px;top:748px;width:2px;height:2px;background:#0a2a90;box-shadow:1px 1px 0 #38a0f8"></div>
<div class="a" style="left:106px;top:751px;width:2px;height:2px;background:#0a2a90;box-shadow:1px 1px 0 #38a0f8"></div>
<div class="a" style="left:109px;top:754px;width:2px;height:2px;background:#0a2a90;box-shadow:1px 1px 0 #38a0f8"></div>
<div class="a" style="left:106px;top:757px;width:2px;height:2px;background:#0a2a90;box-shadow:1px 1px 0 #38a0f8"></div>
<div class="a" style="left:109px;top:760px;width:2px;height:2px;background:#0a2a90;box-shadow:1px 1px 0 #38a0f8"></div>
<div class="a" style="left:106px;top:763px;width:2px;height:2px;background:#0a2a90;box-shadow:1px 1px 0 #38a0f8"></div>
<div class="a" style="left:306px;top:745px;width:2px;height:2px;background:#0a2a90;box-shadow:1px 1px 0 #38a0f8"></div>
<div class="a" style="left:309px;top:748px;width:2px;height:2px;background:#0a2a90;box-shadow:1px 1px 0 #38a0f8"></div>
<div class="a" style="left:306px;top:751px;width:2px;height:2px;background:#0a2a90;box-shadow:1px 1px 0 #38a0f8"></div>
<div class="a" style="left:309px;top:754px;width:2px;height:2px;background:#0a2a90;box-shadow:1px 1px 0 #38a0f8"></div>
<div class="a" style="left:306px;top:757px;width:2px;height:2px;background:#0a2a90;box-shadow:1px 1px 0 #38a0f8"></div>
<div class="a" style="left:309px;top:760px;width:2px;height:2px;background:#0a2a90;box-shadow:1px 1px 0 #38a0f8"></div>
<div class="a" style="left:306px;top:763px;width:2px;height:2px;background:#0a2a90;box-shadow:1px 1px 0 #38a0f8"></div>
<div class="a" style="left:866px;top:745px;width:2px;height:2px;background:#0a2a90;box-shadow:1px 1px 0 #38a0f8"></div>
<div class="a" style="left:869px;top:748px;width:2px;height:2px;background:#0a2a90;box-shadow:1px 1px 0 #38a0f8"></div>
<div class="a" style="left:866px;top:751px;width:2px;height:2px;background:#0a2a90;box-shadow:1px 1px 0 #38a0f8"></div>
<div class="a" style="left:869px;top:754px;width:2px;height:2px;background:#0a2a90;box-shadow:1px 1px 0 #38a0f8"></div>
<div class="a" style="left:866px;top:757px;width:2px;height:2px;background:#0a2a90;box-shadow:1px 1px 0 #38a0f8"></div>
<div class="a" style="left:869px;top:760px;width:2px;height:2px;background:#0a2a90;box-shadow:1px 1px 0 #38a0f8"></div>
<div class="a" style="left:866px;top:763px;width:2px;height:2px;background:#0a2a90;box-shadow:1px 1px 0 #38a0f8"></div>
<div class="t" style="left:35px;top:743px;font-size:17px;line-height:20px;font-weight:bold;font-style:italic;color:#fff;letter-spacing:0;text-shadow:1px 1px 1px #1a4a1a">start</div>
<svg class="a" style="left:119px;top:744px" width="17" height="17"><path d="M2 3h10l3 3v9h-13z" fill="#fff8d8" stroke="#3a78d0" stroke-width="1.2"/><path d="M3 4h8v4h-8z" fill="#80c0f8"/><circle cx="8" cy="10" r="3.5" fill="none" stroke="#3060a0" stroke-width="1.3"/><path d="M5 13l3-3" stroke="#000" stroke-width="1.5"/><circle cx="15" cy="6" r="1.6" fill="#f06020"/><path d="M1 15h4" stroke="#3060c0" stroke-width="2"/></svg>
<svg class="a" style="left:142px;top:744px" width="17" height="17"><ellipse cx="8.5" cy="9" rx="8" ry="3.6" fill="none" stroke="#8cd0f8" stroke-width="1.1" transform="rotate(-35 8.5 9)"/><path d="M4.2 9.6h8.6c0.3-3.2-1.6-5.6-4.3-5.6c-2.8 0-4.6 2.4-4.6 5.3c0 3 2 5.2 4.7 5.2c1.8 0 3.2-0.8 4-2.2" fill="none" stroke="#2a8cf0" stroke-width="2.6"/><path d="M6 8h5" stroke="#2a8cf0" stroke-width="1"/></svg>
<svg class="a" style="left:165px;top:744px" width="17" height="17"><path d="M1 9.5l8-7l7 5l-8 7z" fill="#109010" stroke="#002000" stroke-width="1"/><path d="M1 9.5v2l7 5l8-7v-2l-8 7z" fill="#fff" stroke="#002000" stroke-width="1"/><path d="M6 5.5l2 4.5l4-2.5" fill="none" stroke="#f8f000" stroke-width="1.8"/></svg>
<svg class="a" style="left:188px;top:744px" width="17" height="17"><circle cx="8.5" cy="8.5" r="7.6" fill="none" stroke="#20a040" stroke-width="1.8"/><path d="M2 5a7.6 7.6 0 0 1 5-4" stroke="#e03020" stroke-width="1.8" fill="none"/><path d="M15 11a7.6 7.6 0 0 1-6 5.5" stroke="#f0c020" stroke-width="1.8" fill="none"/><circle cx="8.5" cy="8.5" r="5.6" fill="#e8f4ff" stroke="#80a8d8" stroke-width="0.8"/><path d="M6.5 5.5l5 3l-5 3z" fill="#102070"/></svg>
<svg class="a" style="left:211px;top:744px" width="18" height="18"><path d="M3.5 14.5c1-1 1.5-3 2-6c0.6-3.5 1.8-5 3.5-5c1.7 0 2.9 1.5 3.5 5c0.5 3 1 5 2 6z" fill="#f8d000" stroke="#403000" stroke-width="0.9"/><path d="M11 5c1 2 1.5 5 2 9h1.5c-1-1-1.5-3-2-6c-0.3-1.5-0.8-2.5-1.5-3z" fill="#e89000"/><path d="M1.5 15.5c2-2 13-2 15 0c-1 2.5-14 2.5-15 0z" fill="#fff" stroke="#202020" stroke-width="0.9"/><rect x="8" y="14.5" width="2" height="3" fill="#000"/><path d="M7.5 10.5l6.5-6.5" stroke="#402800" stroke-width="2.6"/><path d="M7.5 10.5l6.5-6.5" stroke="#f0c040" stroke-width="1.4"/><rect x="13" y="1.5" width="3" height="3" fill="#ff1010"/><circle cx="8" cy="10.5" r="1.2" fill="#000"/></svg>
<svg class="a" style="left:234px;top:744px" width="16" height="16" shape-rendering="crispEdges"><rect x="0.5" y="0.5" width="15" height="15" fill="#0818f0" stroke="#000040"/><rect x="1" y="1" width="1" height="2" fill="#c0d0ff"/><rect x="4" y="1" width="7" height="5" fill="#e0e0e0"/><rect x="8" y="2" width="2" height="3" fill="#0818f0"/><rect x="3" y="1" width="1" height="5" fill="#000"/><rect x="2" y="8" width="12" height="7" fill="#fff"/><rect x="2" y="10" width="12" height="1.5" fill="#e01818"/><rect x="2" y="13" width="12" height="2" fill="#e01818"/></svg>
<svg class="a" style="left:257px;top:744px" width="17" height="17" shape-rendering="crispEdges"><rect x="0.5" y="0.5" width="16" height="16" fill="#fff4d8" stroke="#e08010"/><circle cx="8.5" cy="8.5" r="5" fill="none" stroke="#c89030" stroke-width="1.4" shape-rendering="auto"/><path d="M8.5 5v3.5h2.5" stroke="#c89030" fill="none" stroke-width="1.2"/></svg>
<svg class="a" style="left:280px;top:744px" width="17" height="17"><rect x="0" y="0" width="17" height="17" fill="#a8b8d8"/><rect x="1" y="1" width="15" height="15" fill="#c8d4e8"/><path d="M8.5 2l6 6h-3.5v6h-5v-6h-3.5z" fill="#60d080"/></svg>
<div class="a" style="left:316px;top:741px;width:77px;height:25px;border-radius:3px;box-sizing:border-box;background:linear-gradient(#f0a848 0px,#e88a14 2px,#e47e08 12px,#de7806 22px,#c86a00 25px);border:1px solid #b05c00;"></div>
<svg class="a" style="left:326px;top:745px" width="16" height="16" shape-rendering="crispEdges"><rect x="0.5" y="0.5" width="15" height="15" fill="#0818f0" stroke="#000040"/><rect x="1" y="1" width="1" height="2" fill="#c0d0ff"/><rect x="4" y="1" width="7" height="5" fill="#e0e0e0"/><rect x="8" y="2" width="2" height="3" fill="#0818f0"/><rect x="3" y="1" width="1" height="5" fill="#000"/><rect x="2" y="8" width="12" height="7" fill="#fff"/><rect x="2" y="10" width="12" height="1.5" fill="#e01818"/><rect x="2" y="13" width="12" height="2" fill="#e01818"/></svg>
<div class="t" style="left:346px;top:747px;color:#fff;letter-spacing:0.3px">Win...</div>
<div class="a" style="left:394px;top:741px;width:75px;height:25px;border-radius:3px;box-sizing:border-box;background:linear-gradient(#5aa0f8 0px,#3c84f4 2px,#3a80f2 12px,#3478ee 22px,#2a60d8 25px);border:1px solid #2858c8;"></div>
<svg class="a" style="left:404px;top:745px" width="16" height="16"><circle cx="6" cy="4" r="2.6" fill="#c0e0f0"/><path d="M1 12c1-4 3-6 5-6c2 0 3 2 4 6l-4 3z" fill="#e8f0c0"/><circle cx="10.5" cy="3.5" r="3" fill="#30a060"/><path d="M6 13c1-5 2-7 4.5-7c3 0 4 3 5 7l-5 3z" fill="#f06020"/><path d="M10 6c2 0 4 3 5 7l-3 2z" fill="#2060a0"/><path d="M1 12l4 3l1-2z" fill="#20a040"/></svg>
<div class="t" style="left:424px;top:747px;color:#fff;letter-spacing:0.3px">MSN...</div>
<div class="a" style="left:471px;top:741px;width:75px;height:25px;border-radius:3px;box-sizing:border-box;background:linear-gradient(#5aa0f8 0px,#3c84f4 2px,#3a80f2 12px,#3478ee 22px,#2a60d8 25px);border:1px solid #2858c8;"></div>
<svg class="a" style="left:481px;top:745px" width="16" height="16" shape-rendering="crispEdges"><rect x="0.5" y="0.5" width="15" height="15" fill="#fff4d8" stroke="#e08010"/><circle cx="8" cy="8" r="5" fill="none" stroke="#c89030" stroke-width="1.4" shape-rendering="auto"/><path d="M8 5v3.5h2.5" stroke="#c89030" fill="none" stroke-width="1.2"/></svg>
<div class="t" style="left:501px;top:747px;color:#fff;letter-spacing:0.3px">Inb...</div>
<div class="a" style="left:548px;top:741px;width:76px;height:25px;border-radius:3px;box-sizing:border-box;background:linear-gradient(#5aa0f8 0px,#3c84f4 2px,#3a80f2 12px,#3478ee 22px,#2a60d8 25px);border:1px solid #2858c8;"></div>
<svg class="a" style="left:558px;top:745px" width="16" height="16" shape-rendering="crispEdges"><rect x="0.5" y="0.5" width="15" height="15" fill="#e8f4f0" stroke="#208080"/><path d="M4 3h5c3 0 3 5 0 5h-3v5h-2zM6 5v1h3" fill="#207070"/><path d="M9 9l4 4" stroke="#207070" stroke-width="1.5"/></svg>
<div class="t" style="left:578px;top:747px;color:#fff;letter-spacing:0.3px">kniz...</div>
<div class="a" style="left:625px;top:741px;width:77px;height:25px;border-radius:3px;box-sizing:border-box;background:linear-gradient(#5aa0f8 0px,#3c84f4 2px,#3a80f2 12px,#3478ee 22px,#2a60d8 25px);border:1px solid #2858c8;"></div>
<svg class="a" style="left:635px;top:745px" width="16" height="16" shape-rendering="crispEdges"><rect x="0.5" y="0.5" width="15" height="15" fill="#0818f0" stroke="#000040"/><rect x="1" y="1" width="1" height="2" fill="#c0d0ff"/><rect x="4" y="1" width="7" height="5" fill="#e0e0e0"/><rect x="8" y="2" width="2" height="3" fill="#0818f0"/><rect x="3" y="1" width="1" height="5" fill="#000"/><rect x="2" y="8" width="12" height="7" fill="#fff"/><rect x="2" y="10" width="12" height="1.5" fill="#e01818"/><rect x="2" y="13" width="12" height="2" fill="#e01818"/></svg>
<div class="t" style="left:655px;top:747px;color:#fff;letter-spacing:0.3px">Win...</div>
<div class="a" style="left:704px;top:741px;width:77px;height:25px;border-radius:3px;box-sizing:border-box;background:linear-gradient(#5aa0f8 0px,#3c84f4 2px,#3a80f2 12px,#3478ee 22px,#2a60d8 25px);border:1px solid #2858c8;"></div>
<svg class="a" style="left:714px;top:745px" width="18" height="16"><path d="M3 6l7-5l7 5v8h-14z" fill="#f0f0f0" stroke="#606060" stroke-width="0.8"/><path d="M3 6l7 5l7-5" fill="none" stroke="#808080" stroke-width="0.8"/><rect x="11" y="4" width="4" height="3" fill="#e03030"/><rect x="1" y="8" width="7" height="8" fill="#fff" stroke="#505050" stroke-width="0.8"/><path d="M2.5 10h4M2.5 12h4M2.5 14h4" stroke="#606060" stroke-width="0.6"/></svg>
<div class="t" style="left:734px;top:747px;color:#fff;letter-spacing:0.3px">RE: ...</div>
<div class="a" style="left:781px;top:741px;width:77px;height:25px;border-radius:3px;box-sizing:border-box;background:linear-gradient(#1840b0 0px,#1e4cc0 3px,#2050c4 22px);border:1px solid #1230a0;box-shadow:inset 1px 1px 1px #102a80;"></div>
<svg class="a" style="left:791px;top:744px" width="18" height="18"><path d="M3.5 14.5c1-1 1.5-3 2-6c0.6-3.5 1.8-5 3.5-5c1.7 0 2.9 1.5 3.5 5c0.5 3 1 5 2 6z" fill="#f8d000" stroke="#403000" stroke-width="0.9"/><path d="M11 5c1 2 1.5 5 2 9h1.5c-1-1-1.5-3-2-6c-0.3-1.5-0.8-2.5-1.5-3z" fill="#e89000"/><path d="M1.5 15.5c2-2 13-2 15 0c-1 2.5-14 2.5-15 0z" fill="#fff" stroke="#202020" stroke-width="0.9"/><rect x="8" y="14.5" width="2" height="3" fill="#000"/><path d="M7.5 10.5l6.5-6.5" stroke="#402800" stroke-width="2.6"/><path d="M7.5 10.5l6.5-6.5" stroke="#f0c040" stroke-width="1.4"/><rect x="13" y="1.5" width="3" height="3" fill="#ff1010"/><circle cx="8" cy="10.5" r="1.2" fill="#000"/></svg>
<div class="t" style="left:811px;top:747px;color:#fff;letter-spacing:0.3px">aSc ...</div>
<div class="a" style="left:913px;top:738px;width:111px;height:30px;background:linear-gradient(#18b4f8 0px,#14a8f4 2px,#0c98ee 7px,#0e94ec 25px,#0a7ad8 30px)"></div>
<div class="a" style="left:912px;top:738px;width:1px;height:30px;background:#0c3c90"></div>
<div class="a" style="left:878px;top:745px;width:16px;height:16px;background:#3c6ce0"></div>
<div class="t" style="left:879px;top:747px;color:#fff;letter-spacing:0">EN</div>
<svg class="a" style="left:904px;top:744px" width="19" height="19"><defs><radialGradient id="ag" cx="0.4" cy="0.35" r="0.7"><stop offset="0" stop-color="#6cc8ff"/><stop offset="1" stop-color="#0850c8"/></radialGradient></defs><circle cx="9.5" cy="9.5" r="8.7" fill="url(#ag)" stroke="#1a3a8a" stroke-width="1"/><path d="M11 5.5l-4 4l4 4" fill="none" stroke="#fff" stroke-width="2.2"/></svg>
<svg class="a" style="left:924px;top:745px" width="17" height="17" shape-rendering="crispEdges"><rect x="0.5" y="0.5" width="16" height="16" fill="#fff0d0" stroke="#f08010"/><circle cx="8.5" cy="8.5" r="5.2" fill="none" stroke="#d0a040" stroke-width="1.4" shape-rendering="auto"/><path d="M8.5 5v3.5h2.5" stroke="#d0a040" fill="none" stroke-width="1.2"/></svg>
<svg class="a" style="left:943px;top:745px" width="16" height="16" shape-rendering="crispEdges"><rect x="5" y="0" width="10" height="8" fill="#303050" stroke="#c0c0e0"/><rect x="1" y="4" width="10" height="8" fill="#303050" stroke="#c0c0e0"/><rect x="2" y="12" width="8" height="3" fill="#e0e0f0"/><rect x="8" y="8" width="6" height="3" fill="#c0c0e0"/></svg>
<svg class="a" style="left:960px;top:745px" width="17" height="17"><circle cx="7.5" cy="4" r="3.5" fill="#40a060" stroke="#204080" stroke-width="0.5"/><path d="M1 16c2-5 4-9 6.5-9s4 4 5.5 9z" fill="#90d0a0"/><path d="M7.5 7l4 9h-3z" fill="#3070c0"/><path d="M12 9l4-2v7l-3 2z" fill="#f06020"/></svg>
<div class="t" style="left:983px;top:747px;color:#fff;letter-spacing:0">14:17</div>
<!-- CONTRACT dialog (inactive) -->
<div class="a" style="left:213px;top:144px;width:618px;height:471px;background:#6e80dc;border-radius:8px 8px 0 0"></div><div class="a" style="left:214px;top:173px;width:1px;height:440px;background:#8294e4"></div>
<div class="a" style="left:213px;top:144px;width:618px;height:29px;border-radius:8px 8px 0 0;background:linear-gradient(#a0b4f0 0px,#98b6f2 1px,#7c9ce6 3px,#7a93e0 9px,#7a96e4 13px,#7ea4ec 18px,#80a8ee 24px,#7a90dc 28px)"></div>
<div class="a" style="left:216px;top:173px;width:612px;height:439px;background:#eeeadf"></div>
<div class="a" style="left:216px;top:173px;width:612px;height:1px;background:#fdf6e2"></div>
<div class="t" style="left:219px;top:152px;color:#e0e8fa;font-weight:bold;font-size:13px;line-height:16px;letter-spacing:-0.2px;transform:scaleY(1.1);transform-origin:0 3px">Contract</div>
<div class="a xpb inact" style="left:760px;top:150px;background:linear-gradient(135deg,#7c9cf0,#6a88e4 60%,#7090e8)"><div class="a" style="left:3px;top:11px;width:7px;height:3px;background:#9aa0e8"></div></div>
<div class="a xpb inact" style="left:782px;top:150px;background:linear-gradient(135deg,#5a88f4,#3c6ae8 60%,#3462dc)"><div class="a" style="left:4px;top:3px;width:11px;height:11px;border:1px solid #fff;border-top-width:3px;box-sizing:border-box"></div></div>
<div class="a xpb inactc" style="left:805px;top:150px"><svg class="a" style="left:-1px;top:-1px" width="20" height="20"><path d="M5.5 5.5L15 15M15 5.5L5.5 15" stroke="#fff" stroke-width="2.2"/></svg></div>
<div class="t d" style="left:227px;top:184px">Name o</div>
<div class="t d" style="left:227px;top:204px">Short :</div>
<div class="a" style="left:227px;top:222px;width:60px;height:348px;background:#fff;border:1px solid #7f9db9;box-sizing:border-box"></div>
<div class="a" style="left:228px;top:223px;width:58px;height:21px;background:#eeeadf"></div>
<div class="t d" style="left:235px;top:227px">Subje</div>
<div class="a" style="left:233px;top:245px;width:17px;height:17px">
 <svg width="17" height="17"><circle cx="8.5" cy="8.5" r="7.6" fill="#0c7070" stroke="#d8106a" stroke-width="1.6"/><circle cx="8.5" cy="8.5" r="5.6" fill="#1aa8a8"/><path d="M8.5 8.5V3M8.5 8.5H13" stroke="#d8fcfc" stroke-width="1.2"/><path d="M8.5 8.5L4.8 5" stroke="#e02060" stroke-width="1.3"/><circle cx="8.5" cy="8.5" r="5.2" fill="none" stroke="#fff" stroke-width="1" stroke-dasharray="0.9 1.82"/></svg>
</div>
<div class="a btn" style="left:228px;top:577px;width:60px;height:26px"></div>
<div class="t d" style="left:245px;top:583px">New</div>

<!-- LESSON dialog (active) -->
<div class="a" style="left:263px;top:175px;width:561px;height:455px;background:#0034dc;border-radius:8px 8px 0 0"></div>
<div class="a" style="left:263px;top:190px;width:3px;height:440px;background:linear-gradient(90deg,#0038d8,#0058f0,#0040e0)"></div>
<div class="a" style="left:821px;top:190px;width:3px;height:440px;background:linear-gradient(90deg,#0048e8,#0030c8,#001ea0)"></div>
<div class="a" style="left:263px;top:627px;width:561px;height:3px;background:linear-gradient(#0040e0,#0030c8,#001c98)"></div>
<div class="a" style="left:263px;top:175px;width:561px;height:29px;border-radius:8px 8px 0 0;background:linear-gradient(#0048e0 0px,#0048e0 1px,#3a9aff 1px,#3a9aff 2px,#0a6cff 2px,#0a6cff 3px,#0058e0 3px,#0058e2 10px,#0062f6 14px,#0066fe 18px,#0064fa 26px,#0056e8 27px,#0040d0 28px,#0040d0 29px)"></div>
<div class="a" style="left:266px;top:204px;width:555px;height:423px;background:#eeeadf"></div>
<div class="a" style="left:266px;top:204px;width:555px;height:1px;background:#f8f2de"></div>
<div class="t" style="left:268px;top:183px;color:#fff;font-weight:bold;font-size:13px;line-height:16px;letter-spacing:-0.3px;text-shadow:1px 1px #0a1e8a;transform:scaleY(1.1);transform-origin:0 3px">Lesson</div>
<div class="a xpb actc" style="left:798px;top:180px"><svg class="a" style="left:-1px;top:-1px" width="21" height="21"><path d="M5.8 5.8L15.2 15.2M15.2 5.8L5.8 15.2" stroke="#fff" stroke-width="2.4"/></svg></div>


<!-- lesson content -->
<div class="a gb" style="left:277px;top:221px;width:534px;height:48px"></div>
<div class="t d" style="left:291px;top:240px">Teacher</div>
<div class="a cb dis" style="left:349px;top:236px;width:189px;height:20px"><div class="a ddb disb"><svg class="a" style="left:2px;top:4px" width="10" height="8"><path d="M1.2 1.5L4.8 5.1L8.4 1.5" stroke="#c9c7ba" stroke-width="2.3" fill="none"/></svg></div></div>
<div class="t d" style="left:352px;top:240px;color:#aca899">Arnold (A)</div>
<div class="a btn" style="left:557px;top:234px;width:105px;height:22px"></div>
<div class="t d" style="left:569px;top:238px">More teachers ...</div>

<div class="t d" style="left:291px;top:285px">Subject :</div>
<div class="a cb" style="left:349px;top:282px;width:189px;height:21px"><div class="a" style="left:2px;top:2px;width:167px;height:15px;background:#316ac5"></div><div class="a ddb"><svg class="a" style="left:2px;top:4px" width="10" height="8"><path d="M1.2 1.5L4.8 5.1L8.4 1.5" stroke="#4d6185" stroke-width="2.3" fill="none"/></svg></div></div>
<div class="t d" style="left:353px;top:286px;color:#fff">Physical Education</div>

<div class="a gb" style="left:277px;top:317px;width:534px;height:82px"></div>
<div class="t d" style="left:290px;top:339px">Form</div>
<div class="t d" style="left:327px;top:339px">:</div>
<div class="a cb" style="left:349px;top:337px;width:132px;height:21px"><div class="a ddb"><svg class="a" style="left:2px;top:4px" width="10" height="8"><path d="M1.2 1.5L4.8 5.1L8.4 1.5" stroke="#4d6185" stroke-width="2.3" fill="none"/></svg></div></div>
<div class="t d" style="left:353px;top:341px">5.A</div>
<div class="t d" style="left:290px;top:366px">Joint: 5.A(Boys) 5.B(Boys)</div>
<div class="t d" style="left:502px;top:341px">Group :</div>
<div class="a cb" style="left:556px;top:336px;width:101px;height:21px"><div class="a ddb"><svg class="a" style="left:2px;top:4px" width="10" height="8"><path d="M1.2 1.5L4.8 5.1L8.4 1.5" stroke="#4d6185" stroke-width="2.3" fill="none"/></svg></div></div>
<div class="t d" style="left:560px;top:340px">Boys</div>
<div class="a btn" style="left:690px;top:335px;width:112px;height:22px"></div>
<div class="t d" style="left:711px;top:339px">Add division ...</div>
<div class="a btn" style="left:690px;top:366px;width:112px;height:22px"></div>
<div class="t d" style="left:715px;top:370px">Joint forms ...</div>

<div class="a gb" style="left:277px;top:407px;width:534px;height:71px"></div>
<div class="t d" style="left:293px;top:423px">Lessons/week :</div>
<div class="a" style="left:388px;top:422px;width:92px;height:20px;background:#fff;border:1px solid #7f9db9;box-sizing:border-box"></div>
<div class="t d" style="left:391px;top:425px">3</div>
<div class="t d" style="left:505px;top:423px">Duration</div>
<div class="a cb" style="left:556px;top:419px;width:102px;height:21px"><div class="a ddb"><svg class="a" style="left:2px;top:4px" width="10" height="8"><path d="M1.2 1.5L4.8 5.1L8.4 1.5" stroke="#4d6185" stroke-width="2.3" fill="none"/></svg></div></div>
<div class="t d" style="left:560px;top:423px">Single</div>
<div class="a btn" style="left:686px;top:420px;width:112px;height:22px"></div>
<div class="t d" style="left:723px;top:424px">Cycle ...</div>

<div class="a chk" style="left:290px;top:490px"></div>
<div class="t d" style="left:307px;top:490px">Home classroom</div>
<div class="a chk" style="left:434px;top:490px"></div>
<div class="t d" style="left:450px;top:490px">Sharedroom</div>
<div class="a btn" style="left:668px;top:486px;width:135px;height:22px"></div>
<div class="t d" style="left:691px;top:490px">More classrooms...</div>

<div class="a gb" style="left:277px;top:519px;width:534px;height:67px"></div>
<div class="a" style="left:287px;top:512px;width:195px;height:12px;background:#eeeadf"></div>
<div class="a chk" style="left:290px;top:511px"><svg class="a" style="left:1px;top:1px" width="11" height="11"><path d="M2 5L4.5 7.5L9 3" stroke="#21a121" stroke-width="2" fill="none"/></svg></div>
<div class="t d" style="left:307px;top:511px">Other available classrooms:</div>
<div class="t d" style="left:290px;top:536px">Gym</div>
<div class="a btn" style="left:576px;top:540px;width:81px;height:22px"></div>
<div class="t d" style="left:598px;top:544px">Change</div>
<div class="a btn def" style="left:737px;top:593px;width:73px;height:21px"></div>
<div class="t d" style="left:765px;top:596px">OK</div>


<!-- red ellipses -->
<svg class="a" style="left:0;top:0" width="1024" height="768" shape-rendering="auto">
<ellipse cx="83.2" cy="113.4" rx="42.8" ry="52.4" fill="none" stroke="#ff0000" stroke-width="2.8" transform="rotate(1 83 113.2)"/>
<ellipse cx="744.5" cy="377.1" rx="72" ry="28.4" fill="none" stroke="#ff0000" stroke-width="2.8" transform="rotate(3 744.5 377.1)"/>
</svg>
</div></body></html>
